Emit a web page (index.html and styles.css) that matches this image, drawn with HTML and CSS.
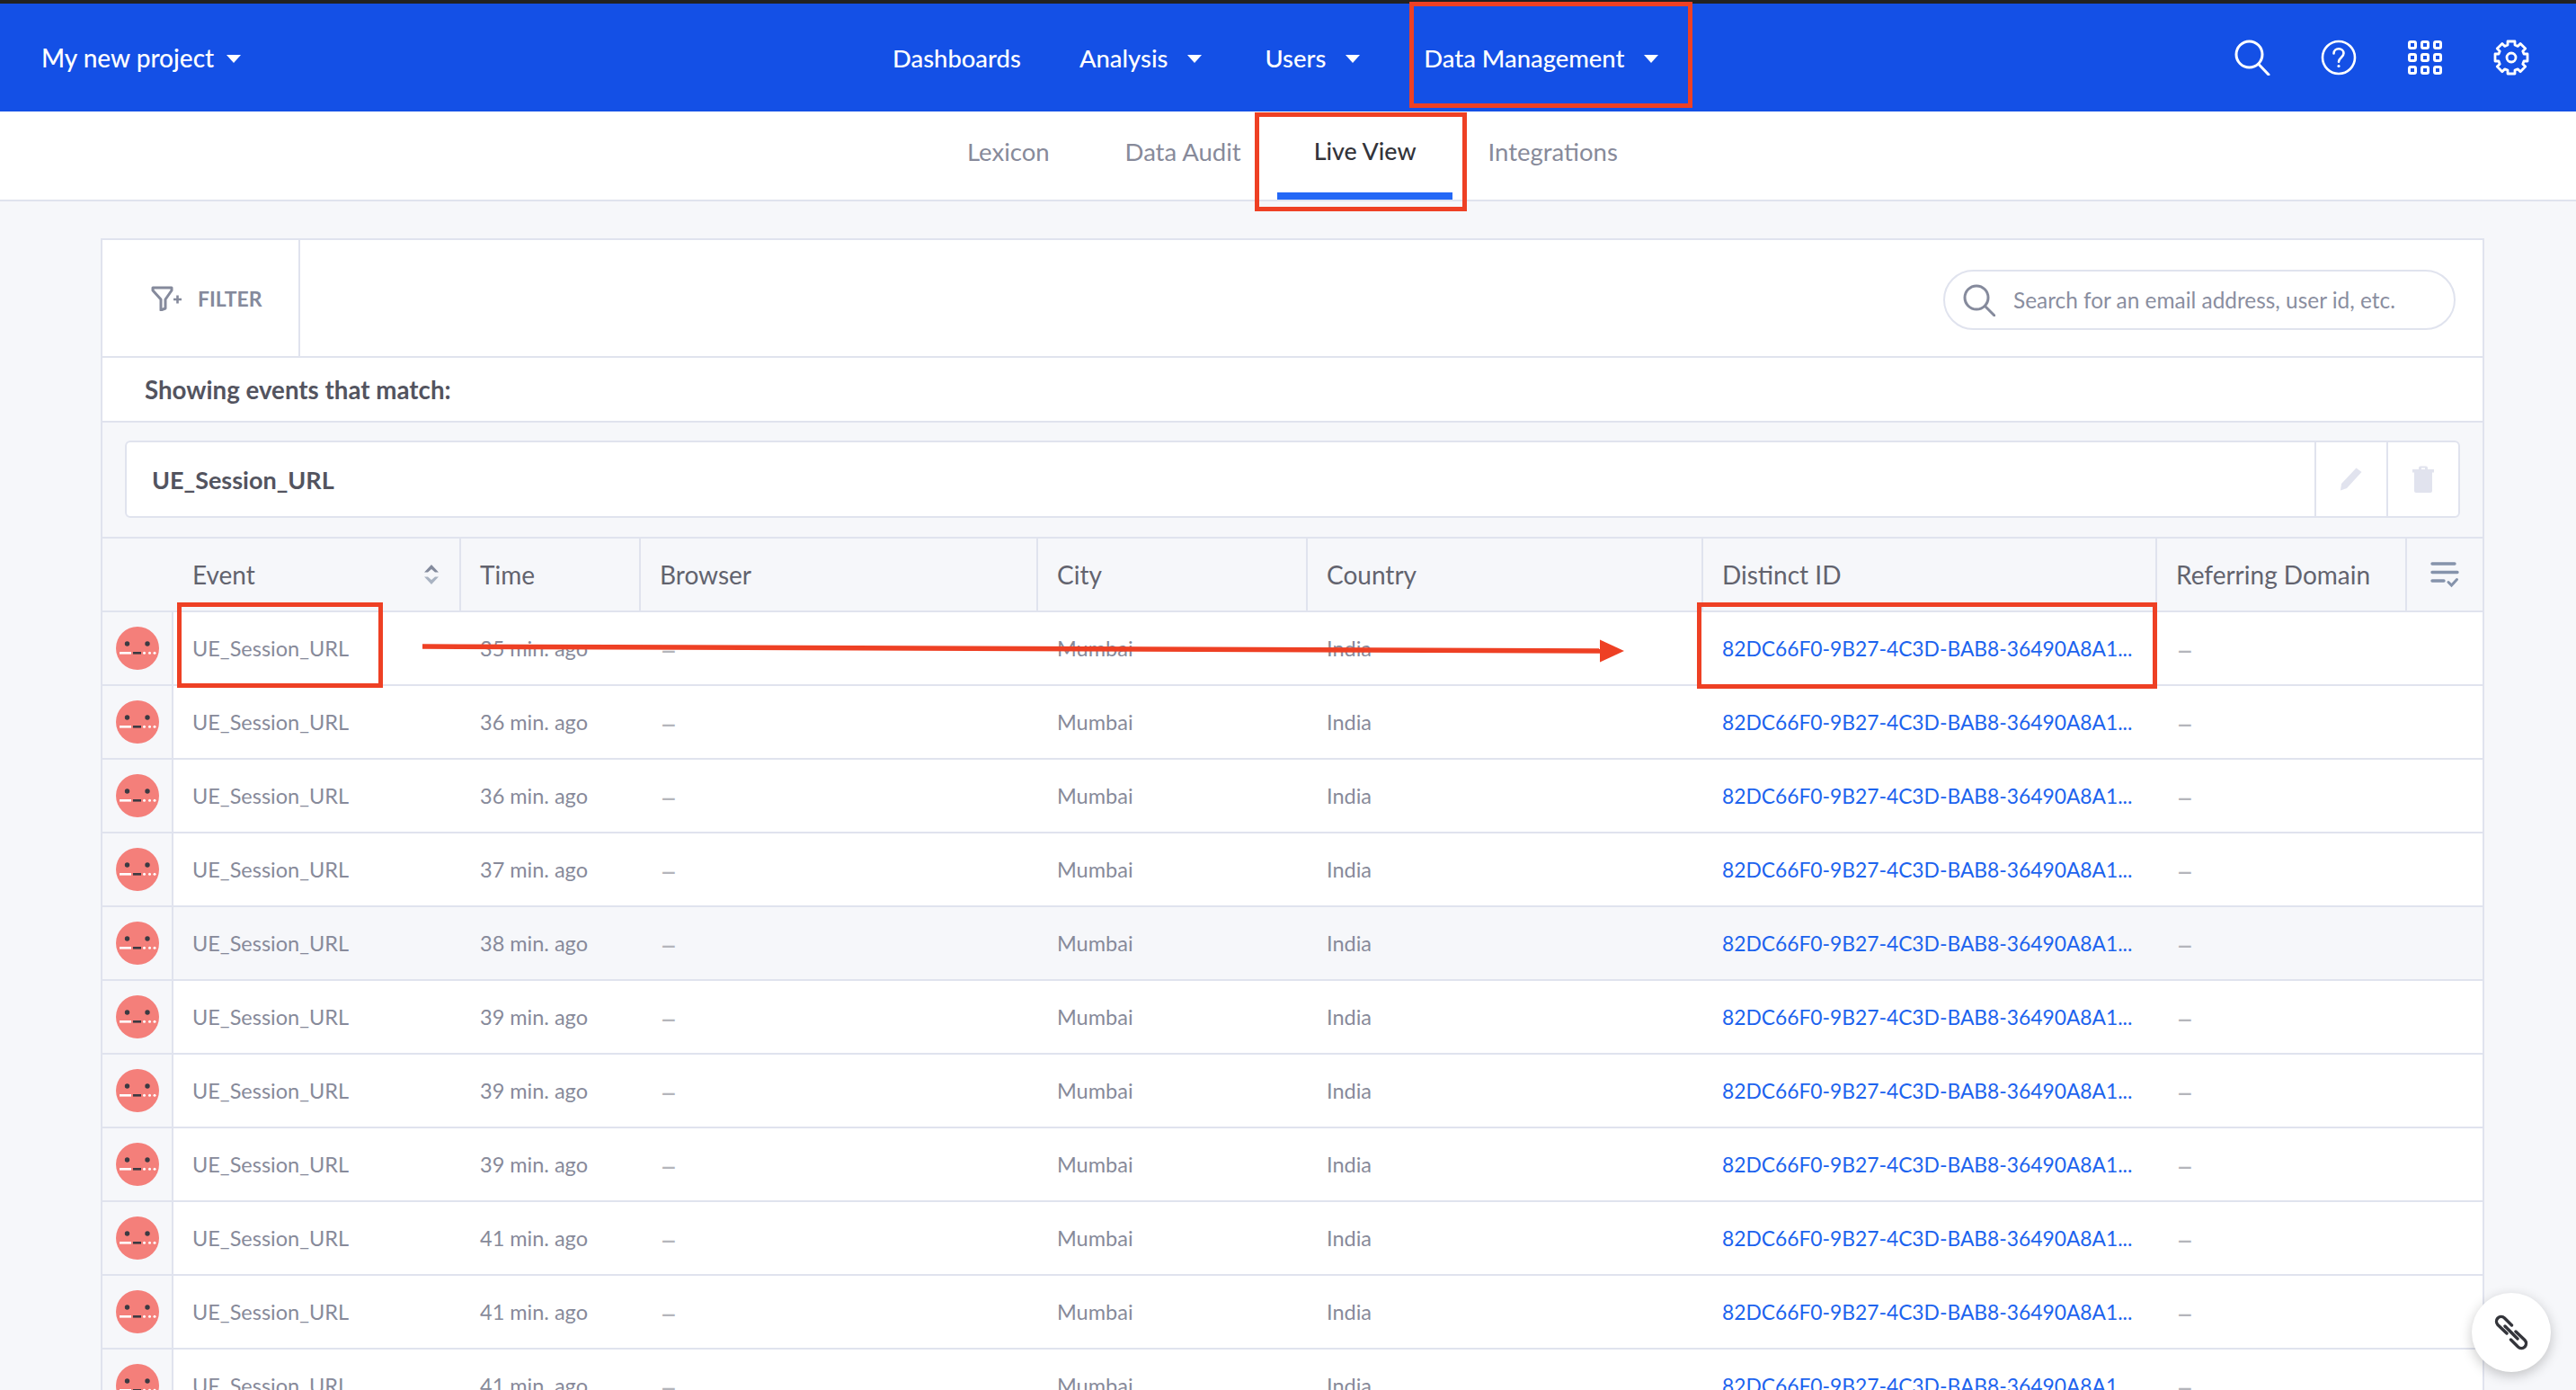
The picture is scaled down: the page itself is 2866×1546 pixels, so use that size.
FILE: index.html
```html
<!DOCTYPE html>
<html lang="en">
<head>
<meta charset="utf-8">
<title>Live View</title>
<link rel="stylesheet" href="styles.css">
</head>
<body>
<div class="page">
  <header class="topbar">
    <div class="brand"><span class="nav-item">My new project<i class="caret"></i></span></div>
    <nav class="mainnav">
      <span class="nav-item n-dash">Dashboards</span>
      <span class="nav-item n-ana">Analysis<i class="caret"></i></span>
      <span class="nav-item n-users">Users<i class="caret"></i></span>
      <span class="nav-item n-data">Data Management<i class="caret"></i></span>
    </nav>
    <div class="top-icons">
      <svg viewBox="0 0 40 40" width="40" height="40" fill="none" stroke="#fff" stroke-width="3"><circle cx="16.5" cy="16.5" r="14.5"/><path d="M27 27.5 38 39" stroke-linecap="round"/></svg>
      <svg viewBox="0 0 40 40" width="40" height="40" fill="none" stroke="#fff" stroke-width="2.6"><circle cx="20" cy="20" r="18"/><path d="M14.5 15.5c0-3.2 2.5-5.2 5.5-5.2s5.5 2 5.5 5c0 4.700-5.500 4.500-5.500 9.500" stroke-linecap="round"/><circle cx="20" cy="29.500" r="1.600" fill="#fff" stroke="none"/></svg>
      <svg viewBox="0 0 40 40" width="40" height="40" fill="none" stroke="#fff" stroke-width="3"><rect x="2.500" y="2.500" width="7" height="7" rx="1.500"/><rect x="16.500" y="2.500" width="7" height="7" rx="1.500"/><rect x="30.500" y="2.500" width="7" height="7" rx="1.500"/><rect x="2.500" y="16.500" width="7" height="7" rx="1.500"/><rect x="16.500" y="16.500" width="7" height="7" rx="1.500"/><rect x="30.500" y="16.500" width="7" height="7" rx="1.500"/><rect x="2.500" y="30.500" width="7" height="7" rx="1.500"/><rect x="16.500" y="30.500" width="7" height="7" rx="1.500"/><rect x="30.500" y="30.500" width="7" height="7" rx="1.500"/></svg>
      <svg viewBox="0 0 40 40" width="40" height="40" fill="none" stroke="#fff" stroke-width="2.800" stroke-linejoin="round"><path d="M16 2h8v4l3.200 1.400 2.900-2.900 5.600 5.600-2.900 2.900L34 16h4v8h-4l-1.200 3.200 2.900 2.900-5.600 5.600-2.900-2.900L24 34v4h-8v-4l-3.200-1.200-2.900 2.900-5.600-5.600 2.900-2.900L6 24H2v-8h4l1.200-3 -2.900-2.900 5.600-5.600 2.900 2.900L16 6z"/><circle cx="20" cy="20" r="5"/></svg>
    </div>
  </header>

  <div class="tabs">
    <span class="tab t-lex">Lexicon</span>
    <span class="tab t-audit">Data Audit</span>
    <span class="tab t-live active">Live View</span>
    <span class="tab t-int">Integrations</span>
  </div>

  <main class="panel">
    <div class="toolbar">
      <div class="filter">
        <svg viewBox="0 0 36 28" width="36" height="28" fill="none" stroke="#858a9c" stroke-width="3" stroke-linejoin="round"><path d="M2 2h21v3l-7 10v10l-5 2V15L2 5z"/><path d="M25 15h9M29.500 10.500v9" stroke-width="2.600"/></svg>
        <span>FILTER</span>
      </div>
      <div class="searchbox">
        <svg viewBox="0 0 36 36" width="36" height="36" fill="none" stroke="#858a9c" stroke-width="3"><circle cx="15" cy="15" r="13"/><path d="M24.500 24.500 35 35" stroke-linecap="round"/></svg>
        <span>Search for an email address, user id, etc.</span>
      </div>
    </div>
    <div class="showing">Showing events that match:</div>
    <div class="querywrap">
      <div class="query">
        <div class="query-name">UE_Session_URL</div>
        <div class="query-btn"><svg viewBox="0 0 26 26" width="26" height="26" fill="#e1e3ee"><path d="M18.500 .5l6 4.500L8 23l-7 2.500L2 18z"/></svg></div>
        <div class="query-btn"><svg viewBox="0 0 26 30" width="26" height="30" fill="#e1e3ee"><path d="M8 2.500Q8 .500 10 .500h6q2 0 2 2V4h7v3.500H1V4h7zM11 2.500V4h4V2.500zM3 7.500h20V28q0 2-2 2H5q-2 0-2-2z" fill-rule="evenodd"/></svg></div>
      </div>
    </div>

    <div class="thead">
      <div class="th th-first"></div>
      <div class="th th-event">Event
        <svg viewBox="0 0 18 22" width="18" height="22"><path d="M9 0l8 8.500H13L9 5 5 8.500H1z" fill="#848b9d"/><path d="M9 22l8-8.500H13L9 17l-4-3.500H1z" fill="#a9b3c2"/></svg>
      </div>
      <div class="th">Time</div>
      <div class="th">Browser</div>
      <div class="th">City</div>
      <div class="th">Country</div>
      <div class="th">Distinct ID</div>
      <div class="th">Referring Domain</div>
      <div class="th th-menu"><svg viewBox="0 0 32 30" width="32" height="30" fill="none" stroke="#8593ab" stroke-width="3.400" stroke-linecap="round"><path d="M2 3h25M2 12.500h28M2 22h13"/><path d="M20 23.500l3.500 3.500 6-6.500" stroke-width="3"/></svg></div>
    </div>
    <div class="tbody" id="rows"></div>
  </main>

  <svg class="anno-line" viewBox="0 0 1340 30" width="1340" height="30"><path d="M0 5 1312 10" stroke="#ee4024" stroke-width="5.500" fill="none"/><path d="M1310 -2.500 1337 10 1310 22.500z" fill="#ee4024"/></svg>
  <div class="anno a-data"></div>
  <div class="anno a-live"></div>
  <div class="anno a-event"></div>
  <div class="anno a-id"></div>

  <button class="fab" type="button" aria-label="Copy link">
    <svg viewBox="0 0 40 40" width="40" height="40" fill="none" stroke="#34353b" stroke-width="3.400" stroke-linecap="round"><path d="M15 21 5 11.500a5.500 5.500 0 0 1 0-7.500 5.500 5.500 0 0 1 7.500 0l8 8"/><path d="M25 19l10 9.500a5.500 5.500 0 0 1 0 7.500 5.500 5.500 0 0 1-7.500 0l-8-8"/><path d="M13 13 27 27"/></svg>
  </button>
</div>
<script src="app.js"></script>
</body>
</html>
```

FILE: app.js
```js
var times = [35, 36, 36, 37, 38, 39, 39, 39, 41, 41, 41];
var face = '<svg viewBox="0 0 48 48" width="48" height="48"><circle cx="24" cy="24" r="24" fill="#f47f7a"/><circle cx="12.500" cy="19" r="2.700" fill="#3a3a42"/><circle cx="35" cy="19" r="2.700" fill="#3a3a42"/><rect x="4" y="28" width="13" height="2.600" fill="#fff"/><rect x="19" y="28" width="9" height="2.600" fill="#3a3a42"/><circle cx="31.500" cy="29.300" r="1.500" fill="#fff"/><circle cx="37.500" cy="29.300" r="1.500" fill="#fff"/><circle cx="43" cy="29.300" r="1.500" fill="#fff"/></svg>';
var html = times.map(function (t) {
  return '<div class="tr">' +
    '<div class="td td-face">' + face + '</div>' +
    '<div class="td">UE_Session_URL</div>' +
    '<div class="td">' + t + ' min. ago</div>' +
    '<div class="td dash">–</div>' +
    '<div class="td">Mumbai</div>' +
    '<div class="td">India</div>' +
    '<div class="td link">82DC66F0-9B27-4C3D-BAB8-36490A8A1...</div>' +
    '<div class="td dash">–</div>' +
    '</div>';
}).join('');
document.getElementById('rows').innerHTML = html;
```

FILE: styles.css
```css
* { box-sizing: border-box; }
html, body { margin: 0; height: 100%; overflow: hidden; }
body { background: #f6f7fa; font-family: Lato, "Liberation Sans", sans-serif; color: #53545f; }
.page { position: relative; height: 1546px; overflow: hidden; }

.topbar { height: 124px; border-top: 4px solid #222; background: #1450e6; display: flex; align-items: center; color: #fff; font-size: 28px; font-weight: 500; }
.brand { width: 993px; padding-left: 46px; }
.mainnav { display: flex; font-size: 27.4px; }
.nav-item { display: inline-flex; align-items: center; color: #fff; white-space: nowrap; }
.caret { display: inline-block; width: 0; height: 0; border-left: 8px solid transparent; border-right: 8px solid transparent; border-top: 9px solid #fff; margin-left: 14px; margin-top: 2px; }
.n-dash { margin-right: 65px; }
.n-ana { margin-right: 70px; }
.n-ana .caret, .n-users .caret, .n-data .caret { margin-left: 22px; }
.n-users { margin-right: 71px; }
.top-icons { margin-left: auto; display: flex; gap: 56px; padding-right: 52px; }

.tabs { height: 100px; background: #fff; border-bottom: 2px solid #e0e3ee; display: flex; padding-left: 1076px; font-size: 27.5px; color: #878a9a; }
.tab { padding-top: 28px; white-space: nowrap; position: relative; }
.t-lex { margin-right: 84px; }
.t-audit { margin-right: 81px; }
.t-live { margin-right: 80px; color: #33343a; font-weight: 500; font-size: 26.8px; }
.t-live::after { content: ""; position: absolute; left: -41px; right: -40px; bottom: 0; height: 8px; background: #2468f6; }

.panel { margin: 41px 102px 0 112px; border: 2px solid #e0e3ee; border-bottom: 0; }
.toolbar { height: 131px; background: #fff; border-bottom: 2px solid #e0e3ee; display: flex; align-items: center; justify-content: space-between; padding-right: 30px; }
.filter { width: 220px; height: 100%; border-right: 2px solid #e0e3ee; display: flex; align-items: center; padding-left: 54px; gap: 16px; font-size: 23px; font-weight: 700; color: #858a9c; }
.searchbox { width: 570px; height: 67px; margin-top: 4px; border: 2px solid #e0e3ee; border-radius: 34px; display: flex; align-items: center; padding-left: 20px; gap: 20px; font-size: 24.4px; color: #8a8e9f; background: #fff; }
.showing { height: 72px; background: #fff; border-bottom: 2px solid #e0e3ee; display: flex; align-items: center; padding-left: 47px; font-size: 27.7px; font-weight: 700; color: #53545f; }
.querywrap { height: 127px; padding: 20px 25px 21px 25px; }
.query { height: 86px; background: #fff; border: 2px solid #e0e3ee; border-radius: 6px; display: flex; }
.query-name { flex: 1; display: flex; align-items: center; padding-left: 28px; font-size: 27px; font-weight: 700; color: #53545f; }
.query-btn { width: 80px; border-left: 2px solid #e0e3ee; display: flex; align-items: center; justify-content: center; }

.thead, .tr { display: grid; grid-template-columns: 79px 320px 200px 442px 300px 440px 505px 278px 1fr; }
.thead { height: 84px; border-top: 2px solid #e0e3ee; border-bottom: 2px solid #e0e3ee; background: #f6f7fa; font-size: 28px; color: #62636e; }
.th { display: flex; align-items: center; padding-left: 21px; border-right: 2px solid #e0e3ee; white-space: nowrap; }
.th-first { border-right: 0; }
.th-event { justify-content: space-between; padding-right: 22px; }
.th-menu { border-right: 0; justify-content: center; padding-left: 0; }

.tr { height: 82px; background: #fff; border-bottom: 2px solid #e0e3ee; font-size: 23.5px; color: #878a9a; }
.tr:nth-child(5) { background: #f6f7fa; }
.td { display: flex; align-items: center; padding-left: 21px; white-space: nowrap; }
.td-face { padding-left: 15px; background: #f6f7fa; border-right: 2px solid #e0e3ee; }
.dash { color: #b4b5bb; font-size: 34px; }
.link { color: #1c63ee; font-size: 22.8px; }

.anno { position: absolute; border: 5px solid #ee4024; }
.a-data { left: 1568px; top: 2px; width: 315px; height: 118px; }
.a-live { left: 1396px; top: 125px; width: 236px; height: 110px; }
.a-event { left: 197px; top: 670px; width: 229px; height: 95px; }
.a-id { left: 1888px; top: 670px; width: 512px; height: 96px; }
.anno-line { position: absolute; left: 470px; top: 714px; overflow: visible; }

.fab { position: absolute; left: 2750px; top: 1438px; width: 88px; height: 88px; border: 0; border-radius: 50%; background: #fff; box-shadow: 0 4px 14px rgba(0,0,0,.22); display: flex; align-items: center; justify-content: center; padding: 0; }
```
